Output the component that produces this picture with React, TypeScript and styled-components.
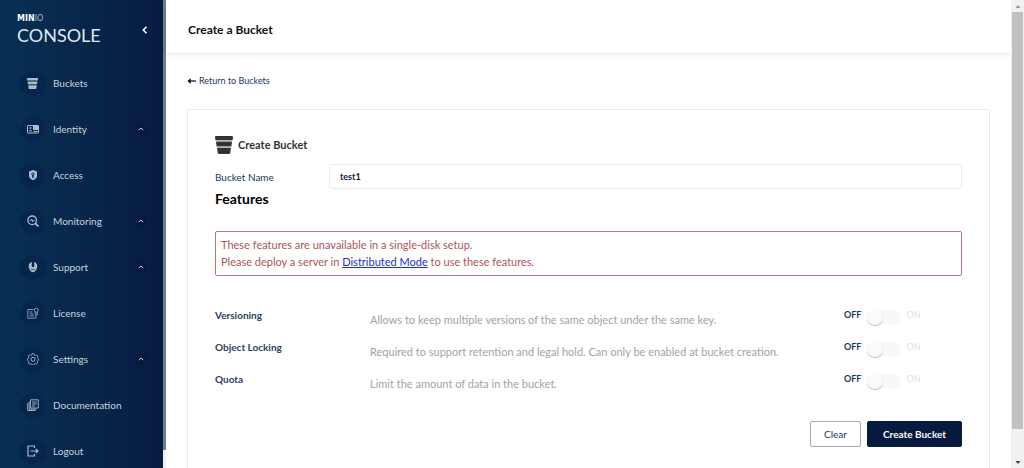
import React from "react";
import styled, { createGlobalStyle } from "styled-components";

const GlobalStyle = createGlobalStyle`
  *, *::before, *::after { box-sizing: border-box; }
  body {
    margin: 0;
    background: #fff;
    color: #07193e;
    font-family: Lato, "Open Sans", sans-serif;
    font-size: 11px;
    line-height: 16px;
  }
  button, input { font-family: inherit; }
`;

const Shell = styled.div`
  display: flex;
  height: 100vh;
  overflow: hidden;
`;

const Sidebar = styled.aside`
  display: flex;
  flex: none;
  width: 166px;
  background: #f0f0f3;
`;

const SidebarPanel = styled.div`
  flex: 1;
  background: linear-gradient(90deg, #073052 0%, #081c42 100%);
`;

const SidebarThumb = styled.div`
  width: 3px;
  height: calc(100% - 18px);
  background: #747b96;
`;

const Brand = styled.div`
  display: flex;
  align-items: center;
  justify-content: space-between;
  padding: 14px 14px 0 17px;
  height: 46px;
  color: #dfe6ee;
`;

const BrandSmall = styled.div`
  font: 700 8px/10px "DejaVu Sans", sans-serif;
  color: #fff;
`;

const Thin = styled.span`
  font-weight: 400;
  color: #a9bacb;
`;

const BrandName = styled.div`
  font-size: 18px;
  line-height: 22px;
`;

const CollapseButton = styled.button`
  display: flex;
  padding: 0;
  border: 0;
  background: none;
  color: #fff;
`;

const NavList = styled.ul`
  margin: 0;
  padding: 14px 16px 0 20px;
  list-style: none;
`;

const NavLink = styled.a`
  display: flex;
  align-items: center;
  gap: 8px;
  height: 46px;
  color: #c6d3de;
  font-size: 10px;
  text-decoration: none;
`;

const NavIcon = styled.span`
  display: flex;
  align-items: center;
  justify-content: center;
  width: 25px;
  height: 25px;
  border-radius: 50%;
  background: #06254c;
  color: #a9bccb;
`;

const NavLabel = styled.span`
  flex: 1;
`;

const NavCaret = styled.span`
  display: flex;
  align-items: center;
  justify-content: center;
  width: 12px;
  height: 12px;
  border-radius: 50%;
  background: #071a3b;
`;

const Main = styled.main`
  display: flex;
  flex: 1;
  flex-direction: column;
  min-width: 0;
`;

const PageHeader = styled.header`
  display: flex;
  flex: none;
  align-items: center;
  height: 53px;
  padding: 6px 22px 0;
  box-shadow: 0 1px 5px rgba(0, 0, 0, 0.1);
`;

const PageTitle = styled.h1`
  margin: 0;
  color: #111;
  font-size: 12px;
  line-height: 16px;
`;

const Content = styled.div`
  padding: 20px 21px 0;
`;

const BackLink = styled.a`
  display: inline-flex;
  align-items: center;
  gap: 3px;
  color: #20385a;
  font-size: 9px;
  text-decoration: none;
`;

const Card = styled.form`
  margin-top: 20px;
  padding: 26px 27px;
  border: 1px solid #eaeaea;
  border-radius: 2px;
`;

const CardTitle = styled.h2`
  display: flex;
  align-items: center;
  gap: 5px;
  margin: 0;
  color: #333;
  font-size: 11px;
  line-height: 18px;
`;

const Field = styled.div`
  display: flex;
  align-items: center;
  margin-top: 10px;
`;

const FieldLabel = styled.label`
  width: 114px;
  color: #20385a;
  font-size: 10px;
`;

const TextInput = styled.input`
  flex: 1;
  min-width: 0;
  height: 25px;
  padding: 0 10px;
  border: 1px solid #eaedee;
  border-radius: 3px;
  outline: 0;
  color: #07193e;
  font-size: 9px;
  font-weight: 700;
`;

const SectionTitle = styled.h3`
  margin: 0;
  color: #000;
  font-size: 14px;
  line-height: 20px;
`;

const Notice = styled.div`
  margin-top: 22px;
  padding: 4px 5px 5px;
  border: 1px solid #b5777c;
  border-radius: 2px;
  color: #ab5459;
  line-height: 17px;

  p { margin: 0; }
  a { color: #2030c8; }
`;

const FeatureList = styled.div`
  display: flex;
  flex-direction: column;
  margin-top: 23px;
`;

const Feature = styled.div`
  display: flex;
  align-items: center;
  height: 32px;
`;

const FeatureLabel = styled.label`
  width: 155px;
  font-size: 10px;
  font-weight: 700;
  color: #2b3e62;
`;

const FeatureHint = styled.span`
  flex: 1;
  padding-top: 10px;
  color: #a3a3a3;
`;

const SwitchGroup = styled.span`
  display: flex;
  align-items: center;
  width: 118px;
  gap: 6px;
`;

const SwitchText = styled.span<{ $active?: boolean }>`
  color: ${(p) => (p.$active ? "#20385a" : "#e2e2e2")};
  font-size: 9px;
  font-weight: ${(p) => (p.$active ? 700 : 400)};
`;

const Switch = styled.input`
  display: flex;
  align-items: center;
  appearance: none;
  width: 33px;
  height: 16px;
  margin: 3px 0 0;
  border-radius: 8px;
  background: #f8f8f8;

  &::before {
    content: "";
    width: 16px;
    height: 16px;
    border-radius: 50%;
    background: #fbfbfb;
    box-shadow: 0 1px 1px 0 #c4c4c4;
  }
`;

const Actions = styled.div`
  display: flex;
  justify-content: flex-end;
  gap: 6px;
  margin-top: 26px;
`;

const Button = styled.button<{ $primary?: boolean }>`
  height: 26px;
  padding: 0 ${(p) => (p.$primary ? 15 : 13)}px;
  border: 1px solid ${(p) => (p.$primary ? "#07193e" : "#a3acb8")};
  border-radius: 2px;
  background: ${(p) => (p.$primary ? "#07193e" : "#fff")};
  color: ${(p) => (p.$primary ? "#fff" : "#20385a")};
  font-size: 10px;
  font-weight: ${(p) => (p.$primary ? 700 : 400)};
`;

const ScrollTrack = styled.div`
  display: flex;
  flex: none;
  flex-direction: column;
  align-items: center;
  width: 13px;
  background: #f1f1f1;
`;

const ScrollArrow = styled.svg`
  flex: none;
  width: 12px;
  height: 12px;
`;

const ScrollThumb = styled.div`
  width: 11px;
  height: 89%;
  margin-bottom: auto;
  background: #c1c1c1;
`;

const Bucket = ({ size = 12, line = "#06254c" }: { size?: number; line?: string }) => (
  <svg width={size} height={size} viewBox="0 0 18 18" fill="currentColor">
    <path d="M0 1Q0 0 1 0H17Q18 0 18 1L17.6 4.2H.4Z" />
    <path d="M1 5.6H17L16.4 10.4H1.6Z" />
    <path d="M2 11.8H16L15.2 17Q15 18 14 18H4Q3 18 2.8 17Z" />
    <path d="M1 4.9H17M1.8 11.1H16.2" stroke={line} strokeWidth="1" />
  </svg>
);

const Icon = ({ children }: { children: React.ReactNode }) => (
  <svg width="12" height="12" viewBox="0 0 12 12" fill="none" stroke="currentColor" strokeWidth="1">
    {children}
  </svg>
);

const navItems = [
  { label: "Buckets", icon: <Bucket size={11} line="#4a6681" /> },
  {
    label: "Identity",
    group: true,
    icon: (
      <Icon>
        <rect x=".5" y="2.5" width="11" height="7.5" rx=".5" />
        <path d="M6 3h5v4H6z" fill="currentColor" stroke="none" />
        <circle cx="3.5" cy="5" r="1" fill="currentColor" stroke="none" />
        <path d="M2 7.8h3M6.5 8.5h4" />
      </Icon>
    ),
  },
  {
    label: "Access",
    icon: (
      <Icon>
        <path d="M6 1L10 2.5V7C10 9 8 10.5 6 11.3C4 10.5 2 9 2 7V2.5Z" fill="currentColor" stroke="none" />
        <circle cx="6" cy="5" r="1.2" stroke="#06254c" strokeWidth=".8" />
        <path d="M6 6v3" stroke="#06254c" strokeWidth="1.4" />
      </Icon>
    ),
  },
  {
    label: "Monitoring",
    group: true,
    icon: (
      <Icon>
        <circle cx="5.2" cy="5.3" r="4.3" strokeWidth="1.3" />
        <path d="M8.3 8.4L11.4 11.4" strokeWidth="1.8" />
        <path d="M2.7 5.5h1.2l.8-1.5 1 2.8.8-1.3h1.2" />
      </Icon>
    ),
  },
  {
    label: "Support",
    group: true,
    icon: (
      <Icon>
        <path
          d="M4.8.7C2.3 1.6 1.3 3.8 1.8 6.3c.5 2.7 2 4.6 4.2 5 2.2-.4 3.8-2.3 4.2-5C10.6 3.8 9.7 1.6 7.2.7L7.3 5.3C7 6.4 5 6.4 4.7 5.3Z"
          fill="currentColor"
          stroke="none"
        />
        <path d="M4 8.2Q6 9.5 8 8.2" stroke="#06254c" strokeWidth=".7" />
      </Icon>
    ),
  },
  {
    label: "License",
    icon: (
      <Icon>
        <g opacity=".75">
          <path d="M6.5 2.5H.8V11.2H9V7.5M2.5 5h3M2.5 7h4M2.5 9h4.5" />
          <circle cx="9.3" cy="3.2" r="2" />
          <path d="M8.3 5v3l1-.8 1 .8V5" />
        </g>
      </Icon>
    ),
  },
  {
    label: "Settings",
    group: true,
    icon: (
      <Icon>
        <path
          d="M5.1.7h1.8l.4 1.3 1.2.5 1.2-.6 1.2 1.3-.6 1.2.4 1 .8.5v1.5l-1 .4-.4 1 .5 1.2-1.2 1.2-1.2-.6-1.1.5-.4 1H5.2l-.4-1-1.2-.5-1.2.6-1.2-1.2.6-1.2-.5-1L.5 7.3V5.6l1-.4.4-1-.6-1.2 1.2-1.2 1.2.6 1-.4Z"
          strokeWidth=".8"
        />
        <circle cx="6" cy="6.3" r="2" strokeWidth=".9" />
      </Icon>
    ),
  },
  {
    label: "Documentation",
    icon: (
      <Icon>
        <path d="M3.5.8H11.3V9H3.5ZM2.2 2.5V10.2H9.5M.7 4V11.5H8.5M5 3h4.8M5 5h4.8M5 7h3" strokeWidth=".9" />
      </Icon>
    ),
  },
  {
    label: "Logout",
    icon: (
      <Icon>
        <path d="M7.5 3V1H1V11H7.5V9M3.5 6H11M8.8 3.8L11 6L8.8 8.2" strokeWidth="1.2" />
      </Icon>
    ),
  },
];

const features = [
  { id: "versioning", label: "Versioning", hint: "Allows to keep multiple versions of the same object under the same key." },
  { id: "locking", label: "Object Locking", hint: "Required to support retention and legal hold. Can only be enabled at bucket creation." },
  { id: "quota", label: "Quota", hint: "Limit the amount of data in the bucket." },
];

export default function App() {
  return (
    <Shell>
      <GlobalStyle />
      <Sidebar>
        <SidebarPanel>
          <Brand>
            <div>
              <BrandSmall>
                MIN<Thin>IO</Thin>
              </BrandSmall>
              <BrandName>CONSOLE</BrandName>
            </div>
            <CollapseButton type="button" aria-label="Collapse menu">
              <svg width="8" height="8" viewBox="0 0 8 8" fill="none" stroke="currentColor" strokeWidth="1.6">
                <path d="M5.5.8L2.3 4L5.5 7.2" />
              </svg>
            </CollapseButton>
          </Brand>
          <nav>
            <NavList>
              {navItems.map((item) => (
                <li key={item.label}>
                  <NavLink href="#">
                    <NavIcon>{item.icon}</NavIcon>
                    <NavLabel>{item.label}</NavLabel>
                    {item.group && (
                      <NavCaret>
                        <svg width="6" height="6" viewBox="0 0 6 6" fill="none" stroke="currentColor">
                          <path d="M.8 4L3 2L5.2 4" />
                        </svg>
                      </NavCaret>
                    )}
                  </NavLink>
                </li>
              ))}
            </NavList>
          </nav>
        </SidebarPanel>
        <SidebarThumb />
      </Sidebar>
      <Main>
        <PageHeader>
          <PageTitle>Create a Bucket</PageTitle>
        </PageHeader>
        <Content>
          <BackLink href="#">
            <svg width="9" height="8" viewBox="0 0 9 8" fill="none" stroke="#07193e" strokeWidth="1.3">
              <path d="M9 4H1" />
              <path d="M3.5 1.5L.8 4L3.5 6.5Z" fill="#07193e" strokeWidth=".5" />
            </svg>
            Return to Buckets
          </BackLink>
          <Card>
            <CardTitle>
              <Bucket size={18} line="#aaa" />
              Create Bucket
            </CardTitle>
            <Field>
              <FieldLabel htmlFor="bucket-name">Bucket Name</FieldLabel>
              <TextInput id="bucket-name" defaultValue="test1" />
            </Field>
            <SectionTitle>Features</SectionTitle>
            <Notice>
              <p>These features are unavailable in a single-disk setup.</p>
              <p>
                Please deploy a server in <a href="#">Distributed Mode</a> to use these features.
              </p>
            </Notice>
            <FeatureList>
              {features.map((f) => (
                <Feature key={f.id}>
                  <FeatureLabel htmlFor={f.id}>{f.label}</FeatureLabel>
                  <FeatureHint>{f.hint}</FeatureHint>
                  <SwitchGroup>
                    <SwitchText $active>OFF</SwitchText>
                    <Switch type="checkbox" id={f.id} disabled />
                    <SwitchText>ON</SwitchText>
                  </SwitchGroup>
                </Feature>
              ))}
            </FeatureList>
            <Actions>
              <Button type="button">Clear</Button>
              <Button type="button" $primary>
                Create Bucket
              </Button>
            </Actions>
          </Card>
        </Content>
      </Main>
      <ScrollTrack>
        <ScrollArrow viewBox="0 0 12 12">
          <path d="M3.5 8L6 5L8.5 8Z" fill="#999" />
        </ScrollArrow>
        <ScrollThumb />
        <ScrollArrow viewBox="0 0 12 12">
          <path d="M3.5 5L6 8L8.5 5Z" fill="#444" />
        </ScrollArrow>
      </ScrollTrack>
    </Shell>
  );
}
